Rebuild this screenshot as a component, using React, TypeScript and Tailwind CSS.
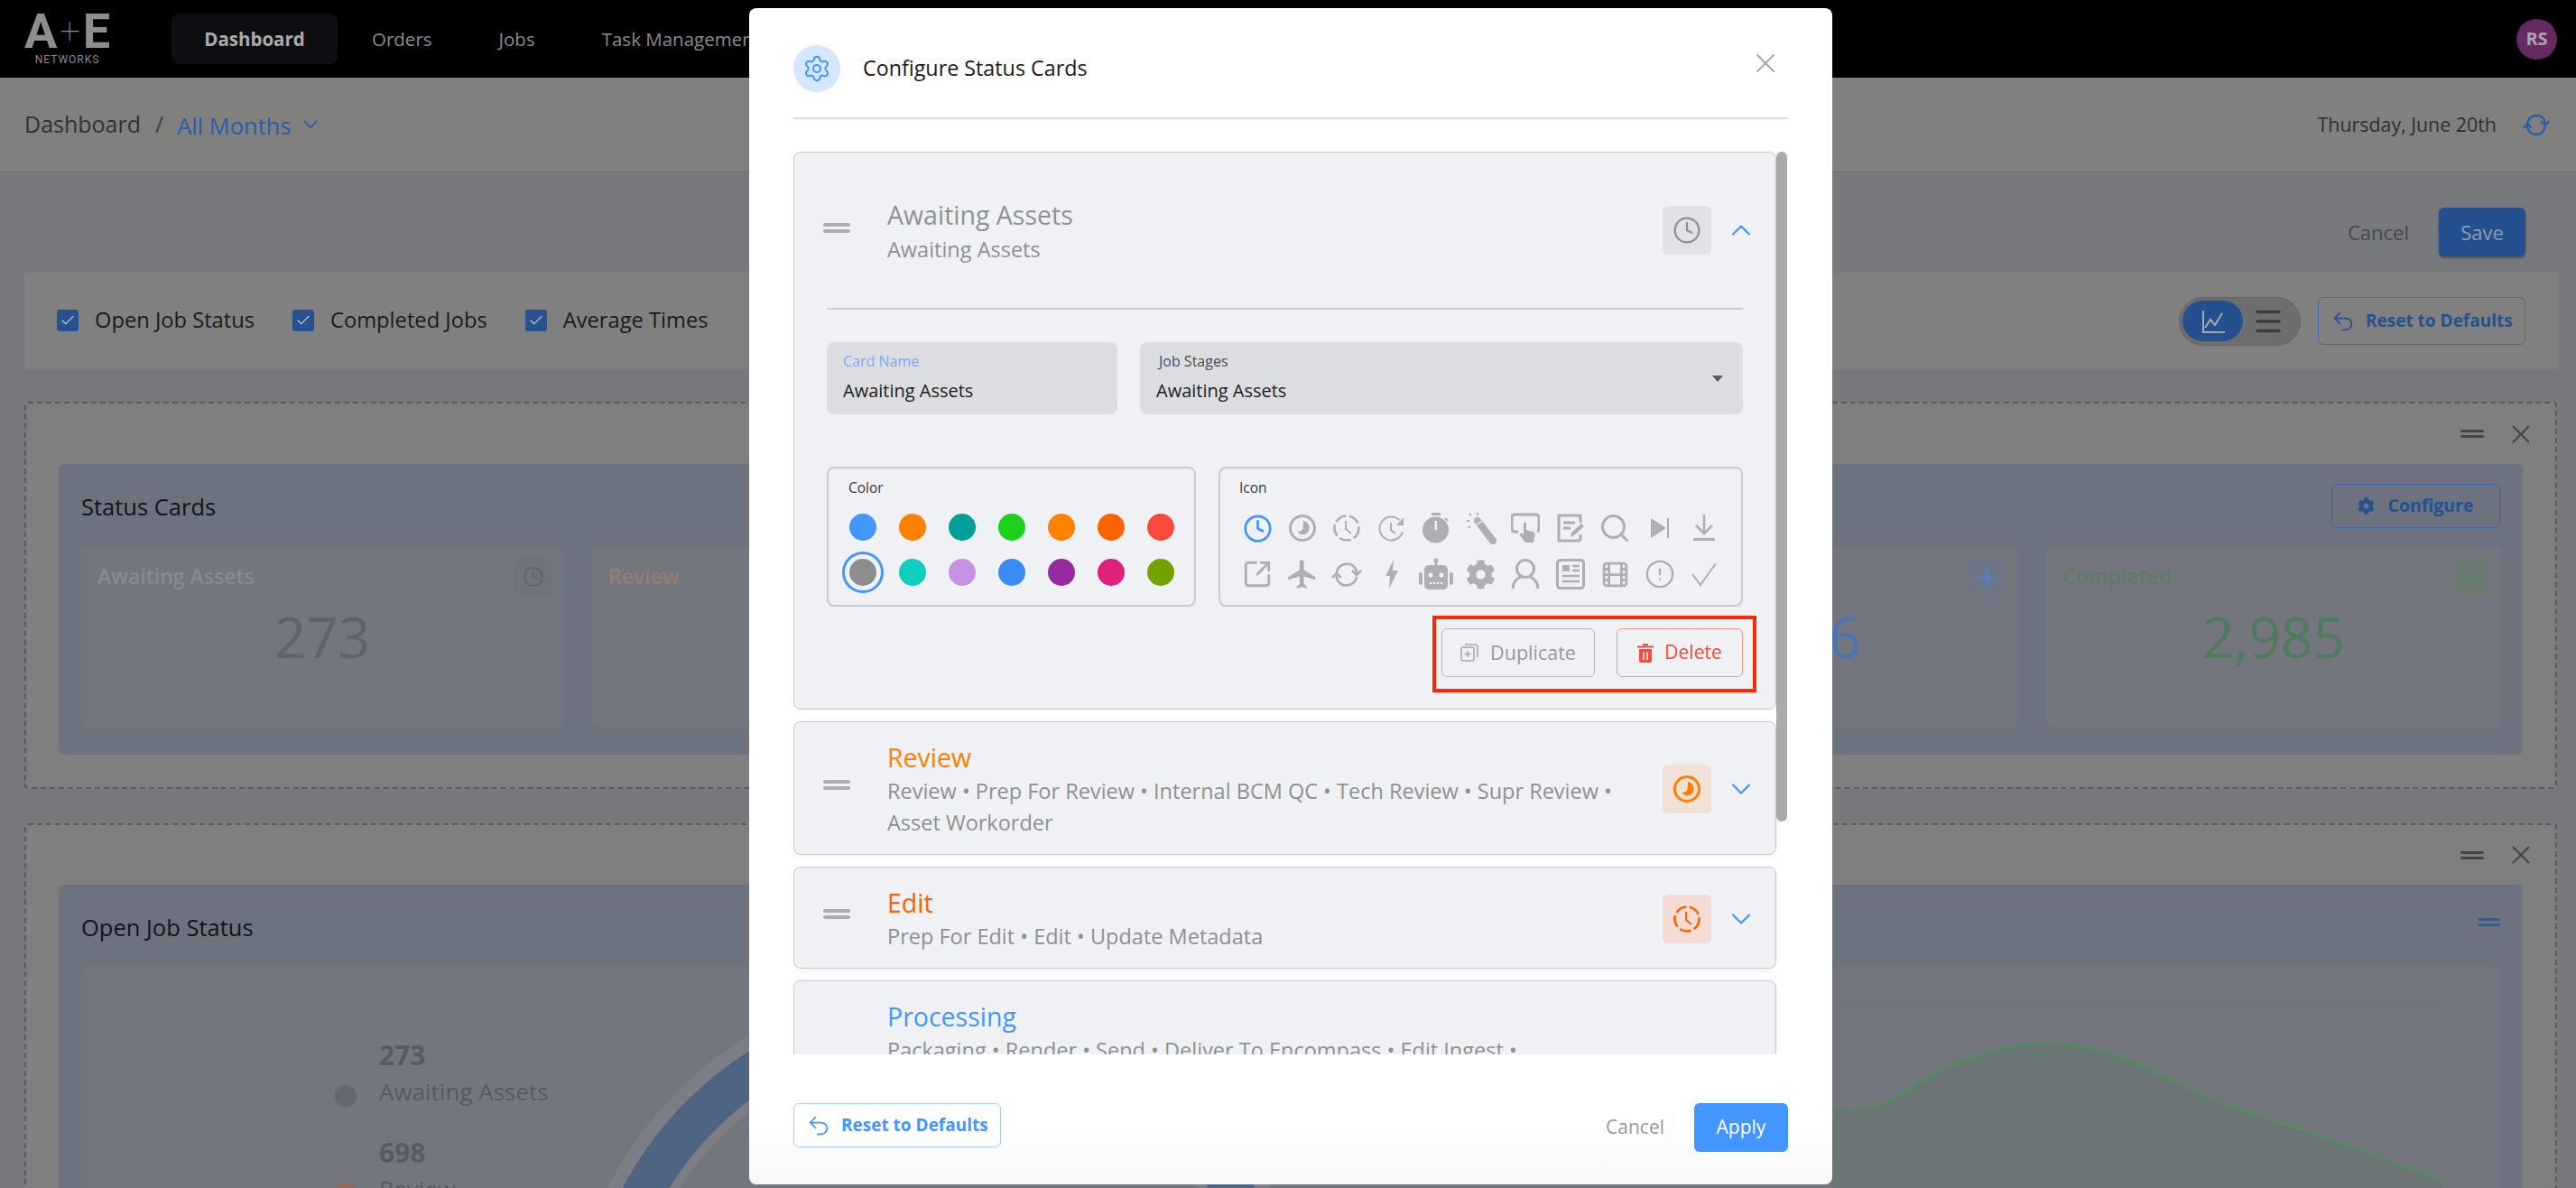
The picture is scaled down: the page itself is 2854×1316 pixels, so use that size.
import { Check, ChevronDown, ChevronUp, CircleAlert, Clock, Film, Menu, Search, Settings, SquareArrowOutUpRight, Undo2, X } from "lucide-react"
import { FaCog } from "react-icons/fa"
import { MdFlight } from "react-icons/md"

const GRAY = "#aeafb3"

// small hand drawn glyphs for the icon picker
function PieClock({ size = 32, color = GRAY }: { size?: number; color?: string }) {
    return (
        <svg width={size} height={size} viewBox="0 0 32 32" fill="none">
            <circle cx="16" cy="16" r="13.5" stroke={color} strokeWidth="3" />
            <path d="M17 8c5 1 7.500 5 6.500 9.500-1 4-5 6.500-9 5.500-2-.5-3.500-2-3.500-3 2 0 5-1 5.500-4 .3-2 .5-5.500.5-8z" fill={color} />
        </svg>
    )
}

function DashedClock({ size = 32, color = GRAY }: { size?: number; color?: string }) {
    return (
        <svg width={size} height={size} viewBox="0 0 32 32" fill="none">
            <circle cx="16" cy="16" r="13.500" stroke={color} strokeWidth="2.600" strokeDasharray="13 3.500" />
            <path d="M15 8v9l6 5" stroke={color} strokeWidth="2" />
        </svg>
    )
}

function RotateClock() {
    return (
        <svg width="32" height="32" viewBox="0 0 32 32" fill="none">
            <path d="M28 20a13 13 0 1 1-3.500-13" stroke={GRAY} strokeWidth="2" />
            <path d="M29 4v9h-8z" fill={GRAY} />
            <path d="M15 10v8l5 4" stroke={GRAY} strokeWidth="2" />
        </svg>
    )
}

function Stopwatch() {
    return (
        <svg width="32" height="34" viewBox="0 0 32 34" fill="none">
            <rect x="11" y="0" width="10" height="3" fill={GRAY} />
            <circle cx="15.500" cy="19" r="14.500" fill={GRAY} />
            <rect x="14.500" y="9" width="2.500" height="10" fill="#f0f1f5" />
            <path d="M26 6l3 3" stroke={GRAY} strokeWidth="2" />
        </svg>
    )
}

function Wand() {
    return (
        <svg width="34" height="36" viewBox="0 0 34 36" fill="none">
            <path d="M13 10l17 22" stroke={GRAY} strokeWidth="8" strokeLinecap="round" />
            <path d="M11 15l7-5" stroke="#f0f1f5" strokeWidth="1.500" />
            <path d="M4 2l2 2M13 1v3M1 10h3M3 18l2-2" stroke={GRAY} strokeWidth="2" />
        </svg>
    )
}

function TouchScreen() {
    return (
        <svg width="32" height="34" viewBox="0 0 32 34" fill="none">
            <path d="M8 21H4a3 3 0 0 1-3-3V5a3 3 0 0 1 3-3h24a3 3 0 0 1 3 3v13a3 3 0 0 1-2 3" stroke={GRAY} strokeWidth="3" />
            <path d="M14 12c0-2 3-2 3 0v7l7 2c2 .5 3 2 2.500 4l-1.500 8H16l-6-8c-1-2 1-3 3-2l1 1z" fill={GRAY} />
        </svg>
    )
}

function NoteEdit() {
    return (
        <svg width="32" height="34" viewBox="0 0 32 34" fill="none">
            <path d="M27 31H3V3h24v8M27 24v7" stroke={GRAY} strokeWidth="3" />
            <path d="M8 11h13M8 17h8" stroke={GRAY} strokeWidth="3" />
            <path d="M16 27l1-5 11-10 3 3-11 10z" fill={GRAY} />
        </svg>
    )
}

function SkipForward() {
    return (
        <svg width="22" height="24" viewBox="0 0 22 24" fill="none">
            <path d="M1 1v22l17-11z" fill={GRAY} />
            <path d="M20 1v22" stroke={GRAY} strokeWidth="2" />
        </svg>
    )
}

function DownloadBar() {
    return (
        <svg width="26" height="32" viewBox="0 0 26 32" fill="none">
            <path d="M13 1v20M4 13l9 9 9-9" stroke={GRAY} strokeWidth="2.500" />
            <rect x="1" y="27" width="24" height="3" rx="1" fill={GRAY} />
        </svg>
    )
}

function Sync({ size = 34, color = GRAY, width = 2.600 }: { size?: number; color?: string; width?: number }) {
    return (
        <svg width={size} height={size} viewBox="0 0 34 34" fill="none" stroke={color} strokeWidth={width}>
            <path d="M6 15a11.500 11.500 0 0 1 21-4 11 11 0 0 1 1 6" />
            <path d="M23 13l5 5 5-5" />
            <path d="M28 20a11.500 11.500 0 0 1-21 4 11 11 0 0 1-1-7" />
            <path d="M1 21l5-5 5 5" />
        </svg>
    )
}

function Bolt() {
    return (
        <svg width="16" height="32" viewBox="0 0 16 32" fill="none">
            <path d="M10 0L1 18h5L5 32l10-20H9z" fill={GRAY} />
        </svg>
    )
}

function Robot() {
    return (
        <svg width="38" height="36" viewBox="0 0 38 36" fill="none">
            <circle cx="19" cy="3" r="2.500" fill={GRAY} />
            <rect x="17.500" y="3" width="3" height="6" fill={GRAY} />
            <rect x="6" y="8" width="26" height="27" rx="5" fill={GRAY} />
            <rect x="0" y="16" width="4" height="14" rx="2" fill={GRAY} />
            <rect x="34" y="16" width="4" height="14" rx="2" fill={GRAY} />
            <circle cx="13" cy="19" r="2.500" fill="#f0f1f5" />
            <circle cx="25" cy="19" r="2.500" fill="#f0f1f5" />
            <path d="M12 28h14" stroke="#f0f1f5" strokeWidth="2" strokeDasharray="2.500 1.500" />
        </svg>
    )
}

function UserOutline() {
    return (
        <svg width="32" height="34" viewBox="0 0 32 34" fill="none">
            <circle cx="16" cy="11" r="9.500" stroke={GRAY} strokeWidth="3" />
            <path d="M2 33c0-8 6-12 9-13M30 33c0-8-6-12-9-13" stroke={GRAY} strokeWidth="3" />
        </svg>
    )
}

function Newspaper() {
    return (
        <svg width="32" height="34" viewBox="0 0 32 34" fill="none">
            <rect x="1.500" y="1.500" width="29" height="31" rx="3" stroke={GRAY} strokeWidth="3" />
            <rect x="7" y="7" width="8" height="7" fill={GRAY} />
            <path d="M18 8h8M18 13h8M7 19h19M7 25h19" stroke={GRAY} strokeWidth="2.500" />
        </svg>
    )
}

function ThinCheck() {
    return (
        <svg width="30" height="28" viewBox="0 0 30 28" fill="none">
            <path d="M2 14l9 12L28 2" stroke={GRAY} strokeWidth="2" />
        </svg>
    )
}

function Handle({ color = "#adadb0", width = "w-[30px]", bar = "h-1" }: { color?: string; width?: string; bar?: string }) {
    return (
        <div className={`flex flex-col gap-[3px] ${width}`}>
            <div className={`${bar} rounded-sm`} style={{ backgroundColor: color }} />
            <div className={`${bar} rounded-sm`} style={{ backgroundColor: color }} />
        </div>
    )
}

function Check2({ label }: { label: string }) {
    return (
        <div className="flex items-center gap-[18px]">
            <div className="flex size-6 items-center justify-center rounded-[3px] bg-[#27528f]">
                <Check size={18} strokeWidth={2} className="text-[#a9b6c6]" />
            </div>
            <span className="-mt-[2px] text-[23.700px] text-[#191a1b]">{label}</span>
        </div>
    )
}

function ResetButton({ box, text }: { box: string; text: string }) {
    return (
        <button className={`flex items-center rounded-md border pl-[13px] font-bold ${box} ${text}`}>
            <Undo2 size={28} strokeWidth={1.5} />
            <span className="ml-[11px] text-[19px]">Reset to Defaults</span>
        </button>
    )
}

function StatCard({ width, title, value, titleColor, valueColor, tile, icon }: { width: string; title: string; value: string; titleColor: string; valueColor: string; tile: string; icon?: React.ReactNode }) {
    return (
        <div className={`relative h-[199px] shrink-0 rounded-md bg-[#73767e] px-[18px] pt-[13px] ${width}`}>
            <div className="flex h-[40px] items-center justify-between">
                <span className={`-mt-[1px] text-[23px] font-semibold ${titleColor}`}>{title}</span>
                <div className={`-mr-[5px] flex size-10 items-center justify-center rounded-sm ${tile}`}>{icon}</div>
            </div>
            <div className={`mt-[1px] text-center text-[62px] leading-[90px] ${valueColor}`}>{value}</div>
        </div>
    )
}

function Background() {
    return (
        <div className="flex h-full flex-col bg-[#77797c]">
            {/* top nav */}
            <nav className="flex h-[86px] shrink-0 items-center justify-between bg-black pl-[26px] pr-[21px]">
                <div className="flex items-center">
                    <div className="flex w-[97px] flex-col items-center font-['Roboto']">
                        <div className="flex h-[42px] items-center text-[54px] font-bold leading-[42px] text-[#8e8e8e]">
                            <span>A</span>
                            <span className="mx-[3px] text-[40px] font-thin">+</span>
                            <span>E</span>
                        </div>
                        <span className="mt-[3px] text-[12px] leading-[14px] tracking-[1px] text-[#8a8a8a]">NETWORKS</span>
                    </div>
                    <div className="ml-[67px] flex items-center gap-[2px] text-[20.500px] text-[#8b8b8b]">
                        <div className="flex h-14 w-[184px] items-center justify-center rounded-lg bg-[#0d0e11] font-bold text-[#ababab]">Dashboard</div>
                        <div className="px-9">Orders</div>
                        <div className="px-9">Jobs</div>
                        <div className="px-9">Task Management</div>
                    </div>
                </div>
                <div className="flex size-[45px] items-center justify-center rounded-full bg-[#652a62] text-[20px] font-bold text-[#b3a0b0]">RS</div>
            </nav>

            {/* breadcrumb */}
            <div className="flex h-[105px] shrink-0 items-center justify-between border-b border-[#6a6b6c] bg-[#80817f] pl-[27px] pr-[29px]">
                <div className="flex items-center text-[25px]">
                    <span className="text-[#303233]">Dashboard</span>
                    <span className="ml-[16px] text-[#3f4142]">/</span>
                    <span className="ml-[15px] mt-[2px] text-[25.500px] text-[#2a5da8]">All Months</span>
                    <ChevronDown size={26} strokeWidth={1.7} className="ml-[8px] text-[#2a5da8]" />
                </div>
                <div className="flex items-center">
                    <span className="text-[21.400px] text-[#2e3031]">Thursday, June 20th</span>
                    <div className="ml-[29px]"><Sync size={30} color="#2a5da8" width={2.800} /></div>
                </div>
            </div>

            {/* actions */}
            <div className="mt-[39px] flex shrink-0 items-center justify-end pr-[56px]">
                <span className="text-[22px] text-[#45474a]">Cancel</span>
                <button className="ml-[33px] h-[54px] w-[96px] rounded-md bg-[#24508f] text-[22px] text-[#8e9cb0] shadow-[0_2px_3px_rgba(0,0,0,0.35)]">Save</button>
            </div>

            {/* widget filter */}
            <div className="ml-[27px] mt-[18px] flex h-[107px] w-[2807px] shrink-0 items-center justify-between bg-[#808080] pl-[36px] pr-[36px]">
                <div className="flex items-center gap-[42px]">
                    <Check2 label="Open Job Status" />
                    <Check2 label="Completed Jobs" />
                    <Check2 label="Average Times" />
                </div>
                <div className="flex items-center gap-[19px]">
                    <div className="flex h-[54px] w-[135px] items-center rounded-full border border-[#636363] bg-[#6e6e6e] pl-[3px]">
                        <div className="flex h-[45px] w-[67px] items-center justify-center rounded-full bg-[#24508f]">
                            <svg width="28" height="28" viewBox="0 0 28 28" fill="none" stroke="#a5a9ad" strokeWidth="2">
                                <path d="M3 2v24h24M5 21l6-9 5 6 8-13" />
                            </svg>
                        </div>
                        <Menu size={36} strokeWidth={2.300} className="ml-[10px] text-[#3d3d3e]" />
                    </div>
                    <ResetButton box="h-[53px] w-[230px] border-[#3868ab]" text="text-[#24518f]" />
                </div>
            </div>

            {/* status cards */}
            <div className="ml-[27px] mt-[36px] h-[429px] w-[2806px] shrink-0 rounded-sm border-2 border-dashed border-[#595a5b] bg-[#7f7f7f] px-[36px]">
                <div className="flex h-[67px] items-center justify-end gap-[24px]">
                    <Handle color="#444546" width="w-[26px]" bar="h-[3px]" />
                    <X size={34} strokeWidth={1.500} className="-mr-[15px] text-[#444546]" />
                </div>
                <div className="h-[322px] rounded-md bg-[#6c737f] px-[25px]">
                    <div className="flex h-[92px] items-center justify-between">
                        <span className="pt-[3px] text-[25.500px] text-[#131415]">Status Cards</span>
                        <button className="flex h-[49px] w-[187px] items-center justify-center gap-[14px] rounded-md border border-[#3868ab] text-[19.500px] font-bold text-[#24518f]">
                            <FaCog size={19} /> Configure
                        </button>
                    </div>
                    <div className="flex gap-8">
                        <StatCard width="w-[534px]" title="Awaiting Assets" value="273" titleColor="text-[#878a90]" valueColor="text-[#5f636c]" tile="bg-[#6f737c]" icon={<Clock size={24} strokeWidth={1.8} className="text-[#5f636c]" />} />
                        <StatCard width="w-[505px]" title="Review" value="698" titleColor="text-[#937e74]" valueColor="text-[#93623a]" tile="bg-[#7d7a77]" />
                        <StatCard width="w-[505px]" title="Edit" value="412" titleColor="text-[#937e74]" valueColor="text-[#934e2a]" tile="bg-[#7d7a77]" />
                        <StatCard width="w-[505px]" title="Processing" value="1,746" titleColor="text-[#5f7fac]" valueColor="text-[#4b74b0]" tile="bg-[#6c7684]" icon={<MdFlight size={26} className="text-[#5a7fb4]" />} />
                        <StatCard width="w-[504px]" title="Completed" value="2,985" titleColor="text-[#5a7d68]" valueColor="text-[#4e7a60]" tile="bg-[#6d7a73]" icon={<Check size={28} strokeWidth={1.6} className="text-[#4f8b60]" />} />
                    </div>
                </div>
            </div>

            {/* open job status */}
            <div className="ml-[27px] mt-[38px] h-[500px] w-[2806px] shrink-0 rounded-sm border-2 border-b-0 border-dashed border-[#595a5b] bg-[#7f7f7f] px-[36px]">
                <div className="flex h-[66px] items-center justify-end gap-[24px]">
                    <Handle color="#444546" width="w-[26px]" bar="h-[3px]" />
                    <X size={34} strokeWidth={1.500} className="-mr-[15px] text-[#444546]" />
                </div>
                <div className="rounded-md bg-[#6c737f] px-[25px]">
                    <div className="flex h-[91px] items-center justify-between">
                        <span className="pt-[3px] text-[25.500px] text-[#131415]">Open Job Status</span>
                        <div className="pb-[8px]">
                            <Handle color="#2a5da8" width="w-[25px]" bar="h-[3px]" />
                        </div>
                    </div>
                    <div className="relative h-[400px] rounded-md bg-[#73767e] pl-[281px] pt-[80px]">
                        <svg className="absolute inset-0" width="2681" height="400" viewBox="90 1072 2681 400" fill="none">
                            <circle cx="1040" cy="1500" r="375" stroke="#7b7e85" strokeWidth="70" />
                            <circle cx="1040" cy="1500" r="372.500" stroke="#4f6483" strokeWidth="45" />
                            <path d="M2030 1112H2706M2030 1176H2706M2030 1242H2706M2030 1307H2706" stroke="#6c7078" strokeWidth="1" />
                            <path d="M2030 1229C2050 1231 2060 1230 2073 1227C2095 1222 2110 1210 2126 1201C2150 1188 2165 1179 2190 1171C2215 1161 2240 1157 2265 1157C2295 1157 2315 1160 2339 1168C2375 1181 2410 1200 2445 1216C2480 1230 2520 1242 2552 1253C2610 1274 2660 1291 2706 1308V1472H2030Z" fill="#6b7575" />
                            <path d="M2030 1229C2050 1231 2060 1230 2073 1227C2095 1222 2110 1210 2126 1201C2150 1188 2165 1179 2190 1171C2215 1161 2240 1157 2265 1157C2295 1157 2315 1160 2339 1168C2375 1181 2410 1200 2445 1216C2480 1230 2520 1242 2552 1253C2610 1274 2660 1291 2706 1308" stroke="#568a62" strokeWidth="3" />
                        </svg>
                        <div className="relative flex flex-col gap-[28px]">
                            <div className="flex items-center">
                                <div className="size-6 translate-y-[23px] rounded-full bg-[#646870]" />
                                <div className="ml-[25px] flex flex-col">
                                    <span className="text-[30px] font-bold leading-[36px] text-[#565a63]">273</span>
                                    <span className="text-[26px] leading-[44px] text-[#565a63]">Awaiting Assets</span>
                                </div>
                            </div>
                            <div className="flex items-center">
                                <div className="size-6 translate-y-[23px] rounded-full bg-[#8e6a59]" />
                                <div className="ml-[25px] flex flex-col">
                                    <span className="text-[30px] font-bold leading-[36px] text-[#565a63]">698</span>
                                    <span className="text-[26px] leading-[44px] text-[#565a63]">Review</span>
                                </div>
                            </div>
                        </div>
                    </div>
                </div>
            </div>
        </div>
    )
}

const COLORS = ["#4496ff", "#ff7f00", "#00a099", "#1dd01d", "#ff8200", "#ff6200", "#f94a3b", "#8f8e8f", "#0fcdc0", "#c592e3", "#3a8bf5", "#952a9e", "#e02179", "#73a200"]

function StageCard({ title, color, stages, tile, icon, clip }: { title: string; color: string; stages: string; tile?: string; icon?: React.ReactNode; clip?: boolean }) {
    return (
        <div className="flex shrink-0 items-center rounded-lg border border-[#c6c7cb] bg-[#f0f1f5] pb-[17px] pl-[32px] pr-[20px] pt-[19px] shadow-[0_2px_8px_rgba(0,0,0,0.05)]">
            <div className={`-mt-[10px] ${clip ? "invisible" : ""}`}>
                <Handle />
            </div>
            <div className="ml-[41px] w-[840px]">
                <div className="text-[28.500px] leading-[40px]" style={{ color }}>{title}</div>
                <div className="text-[23.500px] leading-[35px] text-[#8f9092]">{stages}</div>
            </div>
            {!clip && (
                <div className="ml-[19px] flex items-center">
                    <div className={`flex size-[54px] items-center justify-center rounded-md ${tile}`}>{icon}</div>
                    <ChevronDown size={36} strokeWidth={1.500} className="ml-[15px] text-[#4496ff]" />
                </div>
            )}
        </div>
    )
}

function Modal() {
    return (
        <div className="absolute left-[830px] top-[9px] flex h-[1303px] w-[1200px] flex-col rounded-lg bg-gradient-to-b from-white from-95% to-[#f7f7f7] px-[49px]">
            {/* header */}
            <div className="flex h-[123px] shrink-0 items-start border-b-2 border-[#dcdcde] pt-[41px]">
                <div className="flex size-[52px] items-center justify-center rounded-full bg-[#d5e7ff]">
                    <Settings size={32} strokeWidth={1.5} className="text-[#4496ff]" />
                </div>
                <span className="ml-[25px] mt-[8px] text-[23.300px] text-[#1a1a1c]">Configure Status Cards</span>
                <X size={36} strokeWidth={1.300} className="ml-auto mr-[7px] mt-[2px] text-[#a8a9ac]" />
            </div>

            {/* list */}
            <div className="mt-[36px] flex h-[1000px] shrink-0 overflow-hidden">
                <div className="flex w-[1089px] shrink-0 flex-col gap-[13px]">
                    <div className="flex shrink-0 flex-col rounded-lg border border-[#c6c7cb] bg-[#f0f1f5] px-[36px] pb-[18px]">
                        <div className="-mx-[36px] flex h-[172px] items-start pl-[32px] pr-[20px] pt-[50px]">
                            <div className="mt-[28px]"><Handle /></div>
                            <div className="ml-[41px] flex-1">
                                <div className="text-[28.500px] leading-[38px] text-[#909193]">Awaiting Assets</div>
                                <div className="mt-[2px] text-[23.500px] leading-[35px] text-[#8f9092]">Awaiting Assets</div>
                            </div>
                            <div className="mt-[9px] flex size-[54px] items-center justify-center rounded-md bg-[#e1e2e5]">
                                <Clock size={32} strokeWidth={1.7} className="text-[#8f9092]" />
                            </div>
                            <ChevronUp size={36} strokeWidth={1.500} className="ml-[15px] mt-[18px] text-[#4496ff]" />
                        </div>
                        <div className="h-0.5 bg-[#cbccd0]" />

                        <div className="mt-[36px] flex gap-[25px]">
                            <div className="h-[80px] w-[322px] rounded-lg bg-[#dcdde1] pl-[18px] pt-[10px]">
                                <div className="text-[16px] leading-[22px] text-[#72aefc]">Card Name</div>
                                <div className="mt-[8px] text-[20px] leading-[28px] text-[#1b1b1d]">Awaiting Assets</div>
                            </div>
                            <div className="relative h-[80px] flex-1 rounded-lg bg-[#dcdde1] pl-[18px] pt-[10px]">
                                <div className="pl-[3px] text-[16px] leading-[22px] text-[#4b4c4f]">Job Stages</div>
                                <div className="mt-[8px] text-[20px] leading-[28px] text-[#1b1b1d]">Awaiting Assets</div>
                                <div className="absolute right-[22px] top-[37px] size-0 border-x-[6px] border-t-[7px] border-x-transparent border-t-[#5a5a5c]" />
                            </div>
                        </div>

                        <div className="mt-[58px] flex gap-[25px]">
                            <div className="h-[155px] w-[409px] rounded-lg border-2 border-[#cbccd0] px-[22px] pt-[10px]">
                                <div className="text-[15.500px] leading-[22px] text-[#3a3b3d]">Color</div>
                                <div className="ml-[1px] mt-[18px] grid grid-cols-7 gap-x-[24.800px] gap-y-[20px]">
                                    {COLORS.map((c, i) => (
                                        <div key={i} className={`flex size-[30px] items-center justify-center rounded-full ${i === 7 ? "outline-[3px] outline-offset-[5px] outline-[#4496ff]" : ""}`} style={{ backgroundColor: c }} />
                                    ))}
                                </div>
                            </div>
                            <div className="h-[155px] flex-1 rounded-lg border-2 border-[#cbccd0] px-[21px] pt-[10px]">
                                <div className="text-[15.500px] leading-[22px] text-[#3a3b3d]">Icon</div>
                                <div className="mt-[16px] grid h-[34px] items-center justify-items-center gap-x-[9.500px] [grid-template-columns:repeat(11,40px)]">
                                    <Clock size={33} strokeWidth={2} className="text-[#4496ff]" />
                                    <PieClock />
                                    <DashedClock />
                                    <RotateClock />
                                    <Stopwatch />
                                    <Wand />
                                    <TouchScreen />
                                    <NoteEdit />
                                    <Search size={36} strokeWidth={2} style={{ color: GRAY }} />
                                    <SkipForward />
                                    <DownloadBar />
                                </div>
                                <div className="mt-[16px] grid h-[34px] items-center justify-items-center gap-x-[9.500px] [grid-template-columns:repeat(11,40px)]" style={{ color: GRAY }}>
                                    <SquareArrowOutUpRight size={34} strokeWidth={2} />
                                    <MdFlight size={38} />
                                    <Sync />
                                    <Bolt />
                                    <Robot />
                                    <FaCog size={33} />
                                    <UserOutline />
                                    <Newspaper />
                                    <Film size={33} strokeWidth={2} />
                                    <CircleAlert size={34} strokeWidth={1.7} />
                                    <ThinCheck />
                                </div>
                            </div>
                        </div>

                        <div className="-mr-[15px] ml-auto mt-[10px] flex gap-6 border-4 border-[#ff2800] pb-[13px] pl-[6px] pr-[11px] pt-[10px]">
                            <button className="flex h-[54px] w-[170px] items-center justify-center gap-[13px] rounded-md border border-[#b8b9bd] text-[21.500px] text-[#98989b]">
                                <svg width="20" height="22" viewBox="0 0 20 22" fill="none" stroke="#a5a6a9" strokeWidth="1.600">
                                    <rect x="1" y="5" width="14" height="15" rx="2" />
                                    <path d="M5 2h11a3 3 0 0 1 3 3v11M8 9v7M4.500 12.500h7" />
                                </svg>
                                Duplicate
                            </button>
                            <button className="flex h-[54px] w-[140px] items-center justify-center gap-[12px] rounded-md border border-[#f8968c] text-[21px] text-[#f94a3b]">
                                <svg width="18" height="22" viewBox="0 0 18 22" fill="none">
                                    <path d="M0 3.500h18v2H0zM6 1h6v2H6z" fill="#f94a3b" />
                                    <path d="M2 7h14v13a2 2 0 0 1-2 2H4a2 2 0 0 1-2-2z" fill="#f94a3b" />
                                    <path d="M7 10v9M11 10v9" stroke="#f0f1f5" strokeWidth="1.500" />
                                </svg>
                                Delete
                            </button>
                        </div>
                    </div>

                    <StageCard title="Review" color="#ff7f00" stages="Review • Prep For Review • Internal BCM QC • Tech Review • Supr Review • Asset Workorder" tile="bg-[#f2e1d6]" icon={<PieClock color="#ff7f00" />} />
                    <StageCard title="Edit" color="#ff6200" stages="Prep For Edit • Edit • Update Metadata" tile="bg-[#f4dbd4]" icon={<DashedClock color="#ff6200" />} />
                    <StageCard title="Processing" color="#4496ff" stages={"Packaging • Render • Send • Deliver To Encompass • Edit Ingest • Transcode\u00a0Complete"} clip />
                </div>
                <div className="h-[742px] w-3 shrink-0 rounded-full bg-[#aaaaaa]" />
            </div>

            {/* footer */}
            <div className="mt-[54px] flex shrink-0 items-start justify-between">
                <ResetButton box="h-[49px] w-[230px] border-[#a8ccff]" text="text-[#4496ff]" />
                <div className="flex items-center">
                    <span className="text-[21px] text-[#98989b]">Cancel</span>
                    <button className="ml-[33px] h-[54px] w-[104px] rounded-md bg-[#4496ff] text-[21px] text-white">Apply</button>
                </div>
            </div>
        </div>
    )
}

export default function App() {
    return (
        <div className="relative h-[1316px] w-[2854px] overflow-hidden font-['Open_Sans',sans-serif]">
            <Background />
            <Modal />
        </div>
    )
}
